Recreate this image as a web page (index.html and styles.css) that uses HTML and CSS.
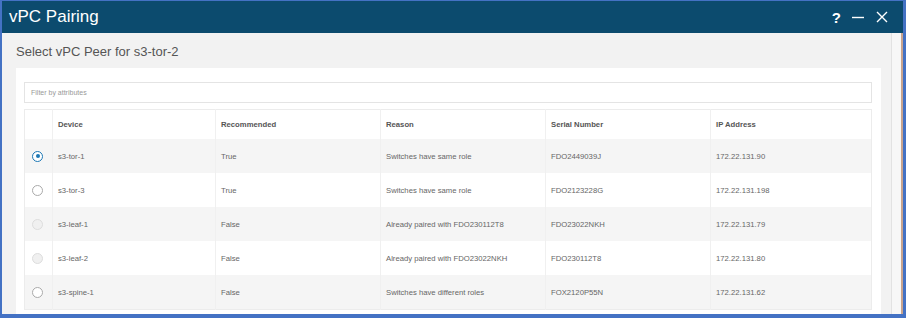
FILE: index.html
```html
<!DOCTYPE html>
<html lang="en">
<head>
    <meta charset="UTF-8">
    <title>vPC Pairing</title>
    <link rel="stylesheet" href="styles.css">
</head>
<body>
    <div class="window">
        <div class="titlebar">
            <div class="title">vPC Pairing</div>
            <div class="controls">
                <span class="help">?</span>
                <svg width="14" height="14" viewBox="0 0 14 14"><path d="M1 7.5H13" stroke="#fff" stroke-width="1.4"/></svg>
                <svg width="14" height="14" viewBox="0 0 14 14"><path d="M2 2L12 12M12 2L2 12" stroke="#fff" stroke-width="1.4"/></svg>
            </div>
        </div>
        <div class="content">
            <div class="main">
                <div class="subtitle">Select vPC Peer for s3-tor-2</div>
                <div class="panel">
                    <div class="filter">Filter by attributes</div>
                    <table class="grid">
                        <thead>
                            <tr>
                                <th class="sel"></th>
                                <th class="dev">Device</th>
                                <th class="col">Recommended</th>
                                <th class="col">Reason</th>
                                <th class="col">Serial Number</th>
                                <th>IP Address</th>
                            </tr>
                        </thead>
                        <tbody>
                            <tr class="odd">
                                <td class="sel"><span class="radio checked"></span></td>
                                <td>s3-tor-1</td><td>True</td><td>Switches have same role</td><td>FDO2449039J</td><td>172.22.131.90</td>
                            </tr>
                            <tr>
                                <td class="sel"><span class="radio"></span></td>
                                <td>s3-tor-3</td><td>True</td><td>Switches have same role</td><td>FDO2123228G</td><td>172.22.131.198</td>
                            </tr>
                            <tr class="odd">
                                <td class="sel"><span class="radio disabled"></span></td>
                                <td>s3-leaf-1</td><td>False</td><td>Already paired with FDO230112T8</td><td>FDO23022NKH</td><td>172.22.131.79</td>
                            </tr>
                            <tr>
                                <td class="sel"><span class="radio disabled"></span></td>
                                <td>s3-leaf-2</td><td>False</td><td>Already paired with FDO23022NKH</td><td>FDO230112T8</td><td>172.22.131.80</td>
                            </tr>
                            <tr class="odd">
                                <td class="sel"><span class="radio"></span></td>
                                <td>s3-spine-1</td><td>False</td><td>Switches have different roles</td><td>FOX2120P55N</td><td>172.22.131.62</td>
                            </tr>
                        </tbody>
                    </table>
                </div>
            </div>
            <div class="scrollbar"></div>
        </div>
    </div>
</body>
</html>
```

FILE: styles.css
```css
body, html {
    margin: 0;
    padding: 0;
    font-family: "Liberation Sans", Arial, sans-serif;
    background: #4472c4;
}

.window {
    width: 906px;
    height: 318px;
    box-sizing: border-box;
    border: 2px solid #4472c4;
    border-top-width: 1px;
    border-bottom-width: 4px;
    border-right-width: 3px;
    display: flex;
    flex-direction: column;
    overflow: hidden;
    background: #f2f2f2;
}

.titlebar {
    height: 32px;
    flex: none;
    background: #0c4b6e;
    color: #fff;
    display: flex;
    align-items: center;
    justify-content: space-between;
    padding: 0 14px 0 7px;
}

.title {
    font-size: 17px;
}

.controls {
    display: flex;
    align-items: center;
    gap: 10px;
}

.help {
    font-size: 15px;
    font-weight: bold;
}

.content {
    flex: 1;
    display: flex;
    min-height: 0;
}

.main {
    flex: 1;
    padding-left: 14px;
    padding-right: 10px;
    display: flex;
    flex-direction: column;
    min-width: 0;
}

.subtitle {
    font-size: 13px;
    color: #555;
    padding: 11px 0 0 0;
    height: 24px;
}

.panel {
    flex: 1;
    background: #fff;
    padding: 14px 9px 0 8px;
}

.filter {
    height: 19px;
    border: 1px solid #e4e4e4;
    font-size: 7px;
    color: #999;
    padding-left: 6px;
    line-height: 19px;
    margin-bottom: 6px;
}

.grid {
    width: 100%;
    border-collapse: collapse;
    border: 1px solid #ececec;
    font-size: 7.7px;
    color: #666;
}

.grid th {
    text-align: left;
    font-weight: bold;
    color: #555;
    height: 29px;
    padding: 0 5px;
    border-left: 1px solid #f0f0f0;
    background: #fff;
}

.grid td {
    height: 34px;
    padding: 0 5px;
    border-left: 1px solid #f0f0f0;
}

.grid th.sel,
.grid td.sel {
    width: 20px;
    padding: 0 0 0 7px;
    border-left: none;
}

.grid tr.odd td {
    background: #f5f5f5;
}

.grid th.dev {
    width: 152px;
}

.grid th.col {
    width: 154px;
}

.radio {
    display: block;
    width: 9px;
    height: 9px;
    border: 1px solid #aaa;
    border-radius: 50%;
    background: #fff;
    position: relative;
}

.radio.checked {
    border-color: #1d78b5;
    border-width: 1.5px;
}

.radio.checked::after {
    content: "";
    position: absolute;
    left: 2.5px;
    top: 2.5px;
    width: 4px;
    height: 4px;
    border-radius: 50%;
    background: #1d78b5;
}

.radio.disabled {
    border-color: #ddd;
    background: #f0f0f0;
}

.scrollbar {
    width: 9px;
    background: #f7f7f7;
    border-left: 1px solid #e2e2e2;
    border-right: 2px solid #c9a48e;
}
```
